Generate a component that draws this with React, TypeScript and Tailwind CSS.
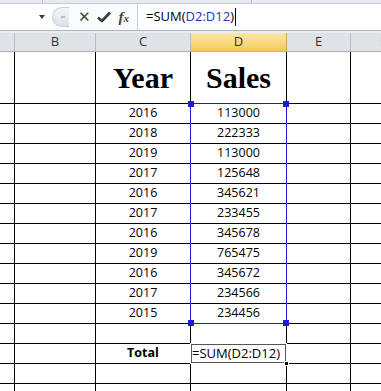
import React from 'react'

const years = ['2016', '2018', '2019', '2017', '2016', '2017', '2016', '2019', '2016', '2017', '2015']
const sales = ['113000', '222333', '113000', '125648', '345621', '233455', '345678', '765475', '345672', '234566', '234456']

const cell = 'shrink-0 border-r border-b border-black flex items-center justify-center'

function Row({ c, d, h = 'h-[20px]', cClass = '', dClass = '' }: { c?: React.ReactNode; d?: React.ReactNode; h?: string; cClass?: string; dClass?: string }) {
  return (
    <div className={`flex ${h}`}>
      <div className={`w-[15px] ${cell}`} />
      <div className={`w-[81px] ${cell}`} />
      <div className={`w-[95px] ${cell} ${cClass}`}>{c}</div>
      <div className={`w-[96px] ${cell} ${dClass}`}>{d}</div>
      <div className={`w-[64px] ${cell}`} />
      <div className={`w-[64px] ${cell}`} />
    </div>
  )
}

function Corner({ pos }: { pos: string }) {
  return <div className={`absolute w-[6px] h-[6px] bg-[#1c1cd8] ${pos}`} />
}

export default function App() {
  return (
    <div className="w-[381px] h-[391px] overflow-hidden bg-white text-black" style={{ fontFamily: '"Open Sans", sans-serif' }}>
      {/* ribbon bottom */}
      <div className="flex h-[4px] bg-[#e6eaef] border-b border-[#c3cbd5]">
        <div className="w-[43px] shrink-0 border-r border-[#b4bec9]" />
        <div className="w-[209px] shrink-0 border-r border-[#b4bec9]" />
      </div>

      {/* formula bar */}
      <div className="flex h-[26px] bg-white">
        <div className="w-[52px] shrink-0 flex items-center justify-end pr-[7px]">
          <span className="block w-0 h-0 border-l-[3px] border-r-[3px] border-t-[4px] border-l-transparent border-r-transparent border-t-[#3a3a3a]" />
        </div>
        <div className="w-[85px] shrink-0 flex items-center bg-[#fafbfc]">
          <div className="w-[17px] h-[20px] rounded-l-full border border-r-0 border-[#c9cfd6] bg-gradient-to-b from-[#f4f6f8] to-[#dde2e8] flex items-center justify-center">
            <span className="block w-[4px] h-[2px] bg-[#b8bec6] ml-[3px]" />
          </div>
          <span className="ml-[9px] text-[15px] leading-none font-bold text-[#444]" style={{ fontFamily: '"DejaVu Sans", sans-serif' }}>✕</span>
          <svg className="ml-[6px]" width="14" height="12" viewBox="0 0 14 12">
            <path d="M1 6.5 L5 10 L13 1.5" fill="none" stroke="#3c3c3c" strokeWidth="2.6" strokeLinejoin="round" />
          </svg>
          <span className="ml-[8px] text-[15px] leading-none italic font-bold text-[#444]" style={{ fontFamily: '"Liberation Serif", serif' }}>
            f<span className="text-[11px]">x</span>
          </span>
        </div>
        <div className="flex-1 border-l border-[#c8ced6] flex items-center pl-[8px] text-[13px]">
          <span>=SUM(</span>
          <span className="text-[#2133c6]">D2:D12</span>
          <span>)</span>
          <span className="ml-[1px] block w-px h-[18px] bg-black" />
        </div>
      </div>

      {/* gap */}
      <div className="h-[3px] bg-[#e9edf1] border-t border-[#aab6c4]" />

      {/* column headers */}
      <div className="flex h-[19px] text-[13px] text-[#333] border-b border-[#a7b3c0]">
        <div className="w-[15px] shrink-0 bg-[#dfe3e8] border-r border-[#b2bdc9]" />
        <div className="w-[81px] shrink-0 bg-[#dfe3e8] border-r border-[#b2bdc9] flex items-center justify-center">B</div>
        <div className="w-[95px] shrink-0 bg-[#dfe3e8] border-r border-[#b2bdc9] flex items-center justify-center">C</div>
        <div className="w-[96px] shrink-0 bg-gradient-to-b from-[#fbe6a6] to-[#f5c956] border-r border-[#c9a24a] flex items-center justify-center">D</div>
        <div className="w-[64px] shrink-0 bg-[#dfe3e8] border-r border-[#b2bdc9] flex items-center justify-center">E</div>
        <div className="w-[64px] shrink-0 bg-[#dfe3e8] flex items-center justify-center text-[#2a57c4]">F</div>
      </div>

      {/* sheet */}
      <div className="relative">
        <Row
          h="h-[52px]"
          c={<span className="text-[30px] font-bold" style={{ fontFamily: '"Liberation Serif", serif' }}>Year</span>}
          d={<span className="text-[30px] font-bold" style={{ fontFamily: '"Liberation Serif", serif' }}>Sales</span>}
        />
        {years.map((y, i) => (
          <Row key={i} c={<span className="text-[12.5px]">{y}</span>} d={<span className="text-[12.5px]">{sales[i]}</span>} />
        ))}
        <Row />
        <Row
          c={<span className="text-[12.5px] font-bold">Total</span>}
          d={<span className="text-[13px] w-full pl-[1px] whitespace-nowrap">=SUM(D2:D12)</span>}
        />
        <Row />
        <Row />

        {/* selection D2:D12 */}
        <div className="absolute left-[190px] top-[51px] w-[97px] h-[221px] border border-[#1c1cd8]">
          <Corner pos="-left-[3px] -top-[3px]" />
          <Corner pos="-right-[3px] -top-[3px]" />
          <Corner pos="-left-[3px] -bottom-[3px]" />
          <Corner pos="-right-[3px] -bottom-[3px]" />
        </div>

        {/* active cell D14 */}
        <div className="absolute left-[190px] top-[291px] w-[97px] h-[21px] border border-white outline outline-1 outline-[#555] -outline-offset-2" />
        <div className="absolute left-[284px] top-[309px] w-[5px] h-[5px] bg-black border border-white" />
      </div>
    </div>
  )
}
